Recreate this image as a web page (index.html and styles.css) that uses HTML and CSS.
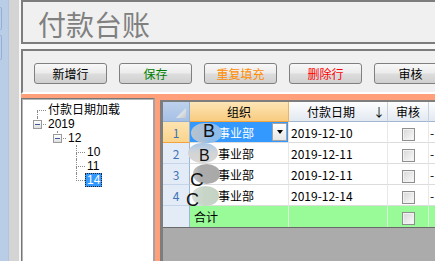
FILE: index.html
```html
<!DOCTYPE html>
<html lang="zh-CN">

<head>
    <meta charset="UTF-8">
    <title>付款台账</title>
    <link rel="stylesheet" href="styles.css">
</head>

<body>
    <div class="app">
        <div class="dock">
            <span class="dock-tab"></span>
            <span class="dock-tab tall"></span>
        </div>
        <div class="gutter"></div>

        <div class="main">
            <div class="title-bar">
                <h1>付款台账</h1>
            </div>

            <div class="toolbar">
                <button class="btn">新增行</button>
                <button class="btn btn-save">保存</button>
                <button class="btn btn-fill">重复填充</button>
                <button class="btn btn-del">删除行</button>
                <button class="btn">审核</button>
            </div>

            <div class="work">
                <!-- date tree -->
                <div class="tree">
                    <div class="node lv0 down">
                        <span class="joint"><span class="joint-top"></span><span class="joint-bot"></span></span>
                        <span class="label">付款日期加载</span>
                    </div>
                    <div class="node lv0 up">
                        <span class="joint"><span class="joint-top"></span><span class="joint-bot"></span></span>
                        <span class="toggle"><i></i></span>
                        <span class="label">2019</span>
                    </div>
                    <div class="node lv1 up">
                        <span class="joint"><span class="joint-top"></span><span class="joint-bot"></span></span>
                        <span class="toggle"><i></i></span>
                        <span class="label">12</span>
                    </div>
                    <div class="node lv2 up down">
                        <span class="joint"><span class="joint-top"></span><span class="joint-bot"></span></span>
                        <span class="label">10</span>
                    </div>
                    <div class="node lv2 up down">
                        <span class="joint"><span class="joint-top"></span><span class="joint-bot"></span></span>
                        <span class="label">11</span>
                    </div>
                    <div class="node lv2 up">
                        <span class="joint"><span class="joint-top"></span><span class="joint-bot"></span></span>
                        <span class="label selected">14</span>
                    </div>
                </div>

                <!-- data grid -->
                <div class="grid">
                    <table class="sheet">
                        <colgroup>
                            <col class="c-rh">
                            <col class="c-org">
                            <col class="c-date">
                            <col class="c-chk">
                            <col class="c-more">
                        </colgroup>
                        <thead>
                            <tr>
                                <th class="corner"><span class="tri"></span></th>
                                <th class="hd active">组织</th>
                                <th class="hd">
                                    <div class="hcell"><span class="htxt">付款日期</span><span class="arrow">↓</span></div>
                                </th>
                                <th class="hd">审核</th>
                                <th class="hd"></th>
                            </tr>
                        </thead>
                        <tbody>
                            <tr>
                                <th class="rh current">1</th>
                                <td class="org sel">事业部
                                    <span class="dd"><i></i></span>
                                    <span class="blob b1"></span>
                                    <span class="ltr l1">B</span>
                                </td>
                                <td>2019-12-10</td>
                                <td class="chk"><span class="box"></span></td>
                                <td class="more">-</td>
                            </tr>
                            <tr>
                                <th class="rh">2</th>
                                <td class="org">事业部
                                    <span class="blob b2"></span>
                                    <span class="ltr l2">B</span>
                                </td>
                                <td>2019-12-11</td>
                                <td class="chk"><span class="box"></span></td>
                                <td class="more">-</td>
                            </tr>
                            <tr>
                                <th class="rh">3</th>
                                <td class="org">事业部
                                    <span class="blob b3"></span>
                                    <span class="ltr l3">C</span>
                                </td>
                                <td>2019-12-11</td>
                                <td class="chk"><span class="box"></span></td>
                                <td class="more">-</td>
                            </tr>
                            <tr>
                                <th class="rh">4</th>
                                <td class="org">事业部
                                    <span class="blob b4"></span>
                                    <span class="ltr l4">C</span>
                                </td>
                                <td>2019-12-14</td>
                                <td class="chk"><span class="box"></span></td>
                                <td class="more">-</td>
                            </tr>
                            <tr class="total">
                                <th class="rh"></th>
                                <td class="sum">合计</td>
                                <td></td>
                                <td class="chk"><span class="box"></span></td>
                                <td></td>
                            </tr>
                        </tbody>
                    </table>
                </div>
            </div>
        </div>
    </div>
</body>

</html>
```

FILE: styles.css
```css
/* General */
body {
    margin: 0;
    font-family: "Noto Sans CJK SC", sans-serif;
    font-size: 12px;
    color: #000;
}

.app {
    display: flex;
    height: 100vh;
    overflow: hidden;
}

/* left dock strip */
.dock {
    width: 9px;
    flex: none;
    box-sizing: border-box;
    background-color: #b9cde6;
    border-right: 1px solid #aec4e0;
    padding-top: 7px;
    display: flex;
    flex-direction: column;
    gap: 5px;
}

.dock-tab {
    width: 1px;
    height: 21px;
    border: 1px solid #94afd6;
    border-left: none;
    border-radius: 0 2px 2px 0;
}

.dock-tab.tall {
    height: 23px;
}

.gutter {
    width: 10px;
    flex: none;
    background-color: #d4d4d4;
}

.main {
    flex: 1;
    min-width: 0;
    display: flex;
    flex-direction: column;
    padding-left: 2px;
    background-color: #f7f7f7;
    overflow: hidden;
}

/* title */
.title-bar {
    flex: none;
    height: 44px;
    box-sizing: border-box;
    border: 2px solid #7d7d7d;
    border-right: none;
    background-color: #f0f0f0;
    padding: 8px 0 0 15px;
}

.title-bar h1 {
    margin: 0;
    font-size: 28px;
    line-height: 28px;
    font-weight: normal;
    color: #808080;
}

/* toolbar */
.toolbar {
    flex: none;
    height: 45px;
    box-sizing: border-box;
    margin-top: 5px;
    border-top: 2px solid #7d7d7d;
    border-left: 2px solid #7d7d7d;
    border-bottom: 2px solid #ffffff;
    background-color: #f0f0f0;
    display: flex;
    gap: 12px;
    padding: 12px 0 0 11px;
}

.btn {
    flex: none;
    width: 73px;
    height: 21px;
    padding: 0;
    border: 1px solid #808080;
    border-radius: 3px;
    background: linear-gradient(to bottom, #f8f8f8 0%, #ececec 45%, #dcdcdc 55%, #d0d0d0 100%);
    font-family: "Noto Sans CJK SC", sans-serif;
    font-size: 12px;
    line-height: 19px;
    color: #000;
}

.btn-save {
    color: #008000;
}

.btn-fill {
    color: #ff8c00;
}

.btn-del {
    color: #ff0000;
}

/* work area */
.work {
    flex: 1;
    min-height: 0;
    display: flex;
    background-color: #ffa07a;
    padding-top: 4px;
}

/* tree */
.tree {
    width: 134px;
    flex: none;
    box-sizing: border-box;
    border-top: 1px solid #767676;
    border-left: 1px solid #767676;
    border-right: 2px solid #a3a3a3;
    box-shadow: inset 1px 1px 0 #b5b5b5;
    background-color: #fff;
    padding-top: 4px;
    font-family: "Liberation Sans", "Noto Sans CJK SC", sans-serif;
}

.node {
    display: flex;
    height: 14px;
    line-height: 14px;
}

.lv0 {
    padding-left: 15px;
}

.lv1 {
    padding-left: 35px;
}

.lv2 {
    padding-left: 54px;
}

.joint {
    flex: none;
    width: 9px;
    display: flex;
    flex-direction: column;
}

.joint-top {
    height: 8px;
    box-sizing: border-box;
    border-bottom: 1px dotted #8a8a8a;
}

.joint-bot {
    flex: 1;
}

.up .joint-top {
    border-left: 1px dotted #8a8a8a;
}

.down .joint-bot {
    border-left: 1px dotted #8a8a8a;
}

.toggle {
    flex: none;
    width: 9px;
    height: 9px;
    box-sizing: border-box;
    margin: 3px 0 0 -13px;
    border: 1px solid #9a9a9a;
    background: linear-gradient(#ffffff, #e0e0e0);
    display: flex;
    align-items: center;
    justify-content: center;
}

.toggle i {
    width: 5px;
    height: 1px;
    background-color: #3d5a98;
}

.toggle + .label {
    margin-left: 4px;
}

.label {
    padding: 0 2px;
    white-space: nowrap;
}

.label.selected {
    padding: 0 1px;
    height: 12px;
    line-height: 12px;
    border: 1px dotted #222;
    background-color: #3399ff;
    color: #fff;
}

/* grid */
.grid {
    flex: 1;
    min-width: 0;
    margin: 2px 0 0 5px;
    border-top: 2px solid #7d7d7d;
    border-left: 3px solid #7d7d7d;
    background-color: #ababab;
    overflow: hidden;
}

.sheet {
    border-collapse: separate;
    border-spacing: 0;
    table-layout: fixed;
    width: 306px;
    font-size: 12px;
    background-color: #fff;
    border-bottom: 1px solid #6a6a6a;
}

.c-rh {
    width: 27px;
}

.c-org {
    width: 99px;
}

.c-date {
    width: 99px;
}

.c-chk {
    width: 41px;
}

.c-more {
    width: 40px;
}

thead tr {
    height: 20px;
}

tbody tr {
    height: 21px;
}

th {
    font-weight: normal;
    padding: 0;
}

.corner {
    background: linear-gradient(#bcd1ec, #a6c0e5);
    border-right: 1px solid #95afd3;
    border-bottom: 1px solid #95afd3;
    vertical-align: bottom;
    text-align: right;
    line-height: 0;
}

.tri {
    display: inline-block;
    width: 10px;
    height: 10px;
    margin: 0 3px 3px 0;
    background: linear-gradient(135deg, #ffffff, #c4c8cc);
    clip-path: polygon(100% 0, 100% 100%, 0 100%);
}

.hd {
    background: linear-gradient(#fdfdfe, #e2e9f1);
    border-right: 1px solid #c7d2df;
    border-bottom: 1px solid #a2b6cf;
    text-align: center;
}

.hd.active {
    background: linear-gradient(#fde5b6, #f8cb80);
    border-right: 1px solid #e7b56a;
    border-bottom: 1px solid #f2a33b;
}

.hcell {
    display: flex;
    align-items: center;
}

.htxt {
    flex: 1;
    text-align: center;
}

.arrow {
    width: 14px;
    text-align: left;
}

.rh {
    background-color: #e3ebf7;
    color: #3e73b5;
    border-right: 1px solid #9db5d6;
    border-bottom: 1px solid #c4d4e9;
    text-align: center;
}

.rh.current {
    background: linear-gradient(#fde3b0, #fbd48c);
    border-bottom: 1px solid #f2a33b;
}

td {
    padding: 0 2px;
    border-right: 1px solid #e8e8e8;
    border-bottom: 1px solid #dcdcdc;
    white-space: nowrap;
    overflow: visible;
}

.org {
    position: relative;
    text-align: center;
    padding-right: 8px;
}

.org.sel {
    background-color: #3399ff;
    color: #fff;
}

/* in-cell dropdown */
.dd {
    position: absolute;
    right: 1px;
    top: 1px;
    width: 15px;
    height: 18px;
    box-sizing: border-box;
    border: 1px solid #a3a3a3;
    background: linear-gradient(#ffffff, #e6e6e6);
    display: flex;
    align-items: center;
    justify-content: center;
}

.dd i {
    width: 0;
    height: 0;
    border-left: 3px solid transparent;
    border-right: 3px solid transparent;
    border-top: 4px solid #000;
}

/* avatar blobs lying over the org cells */
.blob {
    position: absolute;
    top: 0;
    height: 20px;
    border-radius: 14px / 10px;
}

.b1 {
    left: 1px;
    top: 1px;
    width: 31px;
    background: linear-gradient(to right, #b8c4cf 0%, #a9bfd6 40%, #8ebdec 60%, #90bde9 100%);
}

.b2 {
    left: -2px;
    width: 30px;
    background: linear-gradient(#a9c6e6 0%, #c8d2dc 35%, #d4d4d4 55%, #d7d7d7 100%);
}

.b3 {
    left: 3px;
    width: 27px;
    background: linear-gradient(to right, #c2c2c2 0%, #ababab 30%, #a9a9a9 100%);
}

.b4 {
    left: 2px;
    top: 1px;
    width: 27px;
    background: linear-gradient(to right, #d9ddd9 0%, #c8d6c8 40%, #c5d3c5 100%);
}

.ltr {
    position: absolute;
    font-family: "Liberation Sans", sans-serif;
    line-height: 1;
    color: #111;
}

.l1 {
    left: 13px;
    top: 0;
    font-size: 18px;
}

.l2 {
    left: 9px;
    top: 5px;
    font-size: 16px;
}

.l3 {
    left: 0;
    top: 6px;
    font-size: 19px;
}

.l4 {
    left: -4px;
    top: 6px;
    font-size: 18px;
}

.chk {
    text-align: center;
    padding: 0;
}

.box {
    display: inline-block;
    width: 13px;
    height: 13px;
    box-sizing: border-box;
    vertical-align: middle;
    border: 1px solid #8e8e8e;
    background: linear-gradient(135deg, #d6d6d6, #fbfbfb);
    box-shadow: inset 0 0 0 1px #f2f2f2;
}

.more {
    padding: 0 0 0 1px;
}

.total td {
    background-color: #98fb98;
    border-right: 1px solid #d9f7d9;
    border-bottom: none;
}

.total .rh {
    border-bottom: none;
}

.sum {
    padding-left: 4px;
}
```
